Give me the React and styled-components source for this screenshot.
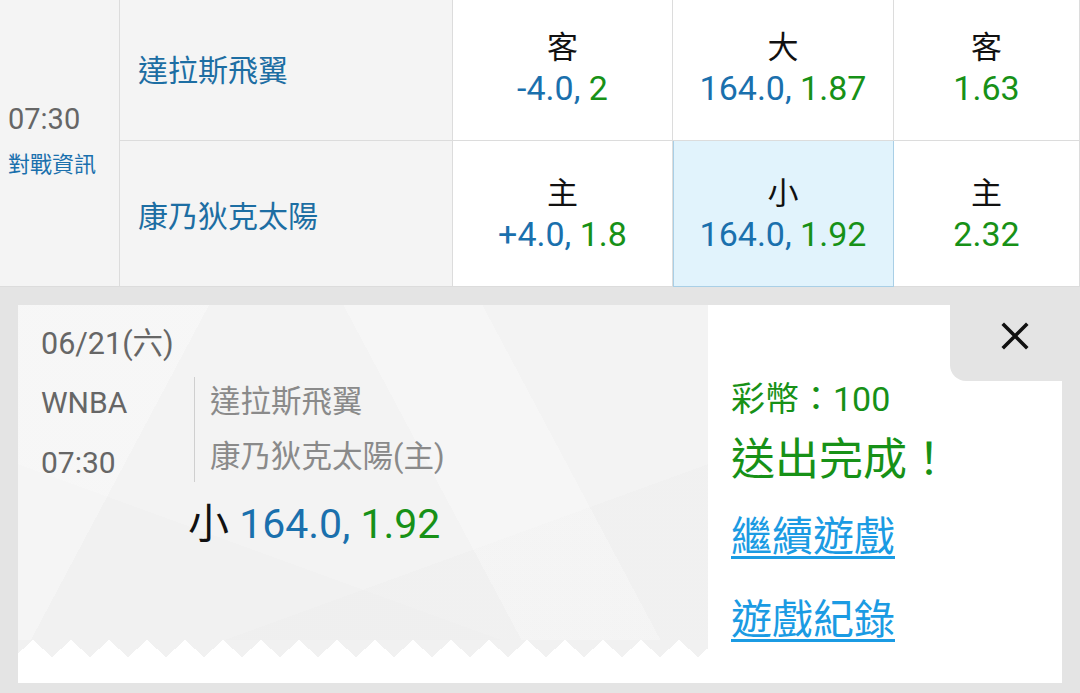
import React from "react";
import styled, { createGlobalStyle } from "styled-components";

const FONT = `Roboto, "Noto Sans CJK TC", sans-serif`;
const BLUE = "#1a70ad";
const GREEN = "#179117";

const GlobalStyle = createGlobalStyle`
  html, body {
    margin: 0;
    padding: 0;
    background: #fff;
    font-family: ${FONT};
    overflow: hidden;
  }
`;

const Page = styled.div`
  width: 1080px;
  height: 693px;
  overflow: hidden;
  display: flex;
  flex-direction: column;
`;

const Table = styled.div`
  display: grid;
  grid-template-columns: 120px 333px 220px 221px 1fr;
  grid-template-rows: 146px 146px;
  margin-top: -5px;
`;

const TimeCell = styled.div`
  grid-row: span 2;
  background: #f4f4f4;
  border-right: 1px solid #dcdcdc;
  border-bottom: 1px solid #dcdcdc;
  display: flex;
  flex-direction: column;
  justify-content: center;
  padding-left: 8px;
`;

const Time = styled.div`
  font-size: 29px;
  color: #666;
  line-height: 36px;
`;

const InfoLink = styled.div`
  font-size: 22px;
  color: ${BLUE};
  line-height: 30px;
  margin-top: 13px;
`;

const TeamCell = styled.div`
  background: #f4f4f4;
  border-right: 1px solid #dcdcdc;
  border-bottom: 1px solid #dcdcdc;
  display: flex;
  align-items: center;
  padding-left: 18px;
  font-size: 30px;
  color: #1d6ea3;
`;

const OddsCell = styled.div`
  background: ${(p) => (p.$active ? "#e1f3fc" : "#fff")};
  border-right: 1px solid ${(p) => (p.$active ? "#a9cfe6" : "#dcdcdc")};
  border-bottom: 1px solid ${(p) => (p.$active ? "#a9cfe6" : "#dcdcdc")};
  box-shadow: ${(p) => (p.$active ? "inset 1px 0 0 #a9cfe6" : "none")};
  display: flex;
  flex-direction: column;
  align-items: center;
  justify-content: center;
`;

const Side = styled.div`
  font-size: 31px;
  line-height: 40px;
  color: #111;
`;

const Value = styled.div`
  font-size: 34px;
  line-height: 40px;
`;

const Blue = styled.span`
  color: ${BLUE};
`;

const Green = styled.span`
  color: ${GREEN};
`;

const Panel = styled.div`
  flex: 1;
  background: #e4e4e4;
  padding: 18px 18px 10px 18px;
  display: flex;
`;

const Card = styled.div`
  flex: 1;
  display: flex;
  background: #fff;
`;

const Ticket = styled.div`
  width: 690px;
  display: flex;
  flex-direction: column;
  padding-bottom: 26px;
`;

const TicketBody = styled.div`
  flex: 1;
  padding: 19px 0 0 23px;
  background-color: #f3f3f3;
  background-image:
    linear-gradient(118deg, rgba(255, 255, 255, 0.3) 0 22%, transparent 22% 100%),
    linear-gradient(62deg, transparent 0 58%, rgba(255, 255, 255, 0.25) 58% 74%, transparent 74%),
    linear-gradient(160deg, transparent 0 70%, rgba(236, 236, 236, 0.35) 70% 100%),
    linear-gradient(20deg, rgba(238, 238, 238, 0.4) 0 30%, transparent 30%);
  color: #666;
`;

const Teeth = styled.div`
  height: 17px;
  background-color: #f1f1f1;
  background-image: conic-gradient(from 132deg at 50% 0, #fff 96deg, transparent 0);
  background-size: 38px 17px;
  background-position: -4px 0;
`;

const DateLine = styled.div`
  font-size: 30.5px;
  line-height: 40px;
`;

const MatchRow = styled.div`
  display: flex;
  margin-top: 13px;
`;

const MatchMeta = styled.div`
  width: 153px;
  display: flex;
  flex-direction: column;
  gap: 8px;
  font-size: 30px;
  line-height: 52px;
`;

const Teams = styled.div`
  align-self: flex-start;
  border-left: 1px solid #cfcfcf;
  padding-left: 15px;
  display: flex;
  flex-direction: column;
  gap: 5px;
  font-size: 30.5px;
  line-height: 50px;
  color: #8a8a8a;
`;

const Pick = styled.div`
  margin: 10px 0 0 147px;
  font-size: 41px;
  line-height: 50px;
  color: #111;
`;

const Result = styled.div`
  flex: 1;
  position: relative;
  padding: 72px 0 0 23px;
  display: flex;
  flex-direction: column;
  align-items: flex-start;
`;

const Close = styled.div`
  position: absolute;
  top: 0;
  right: -18px;
  width: 130px;
  height: 76px;
  background: #e4e4e4;
  border-bottom-left-radius: 16px;
  display: flex;
  justify-content: center;
  padding-top: 17px;
  box-sizing: border-box;
`;

const Coins = styled.div`
  font-size: 34px;
  line-height: 44px;
  color: ${GREEN};
`;

const Done = styled.div`
  margin-top: 11px;
  font-size: 44px;
  line-height: 56px;
  color: ${GREEN};
`;

const Link = styled.a`
  margin-top: ${(p) => p.$gap}px;
  font-size: 41px;
  line-height: 52px;
  color: #1b9be3;
  text-decoration: underline;
  text-decoration-thickness: 3px;
  text-underline-offset: 5px;
  cursor: pointer;
`;

const rows = [
  { team: "達拉斯飛翼", side: "客", spread: "-4.0", spreadOdds: "2", ou: "大", ouOdds: "1.87", ml: "1.63" },
  { team: "康乃狄克太陽", side: "主", spread: "+4.0", spreadOdds: "1.8", ou: "小", ouOdds: "1.92", ml: "2.32", picked: true },
];

export default function App() {
  return (
    <Page>
      <GlobalStyle />
      <Table>
        <TimeCell>
          <Time>07:30</Time>
          <InfoLink>對戰資訊</InfoLink>
        </TimeCell>
        {rows.map((r) => (
          <React.Fragment key={r.team}>
            <TeamCell>{r.team}</TeamCell>
            <OddsCell>
              <Side>{r.side}</Side>
              <Value>
                <Blue>{r.spread}, </Blue>
                <Green>{r.spreadOdds}</Green>
              </Value>
            </OddsCell>
            <OddsCell $active={r.picked}>
              <Side>{r.ou}</Side>
              <Value>
                <Blue>164.0, </Blue>
                <Green>{r.ouOdds}</Green>
              </Value>
            </OddsCell>
            <OddsCell>
              <Side>{r.side}</Side>
              <Value>
                <Green>{r.ml}</Green>
              </Value>
            </OddsCell>
          </React.Fragment>
        ))}
      </Table>
      <Panel>
        <Card>
          <Ticket>
            <TicketBody>
              <DateLine>06/21(六)</DateLine>
              <MatchRow>
                <MatchMeta>
                  <div>WNBA</div>
                  <div>07:30</div>
                </MatchMeta>
                <Teams>
                  <div>達拉斯飛翼</div>
                  <div>康乃狄克太陽(主)</div>
                </Teams>
              </MatchRow>
              <Pick>
                小 <Blue>164.0, </Blue>
                <Green>1.92</Green>
              </Pick>
            </TicketBody>
            <Teeth />
          </Ticket>
          <Result>
            <Close>
              <svg width="28" height="28" viewBox="0 0 28 28">
                <path d="M3 3 L25 25 M25 3 L3 25" stroke="#111" strokeWidth="3.6" strokeLinecap="square" />
              </svg>
            </Close>
            <Coins>彩幣：100</Coins>
            <Done>送出完成！</Done>
            <Link $gap={23}>繼續遊戲</Link>
            <Link $gap={31}>遊戲紀錄</Link>
          </Result>
        </Card>
      </Panel>
    </Page>
  );
}
